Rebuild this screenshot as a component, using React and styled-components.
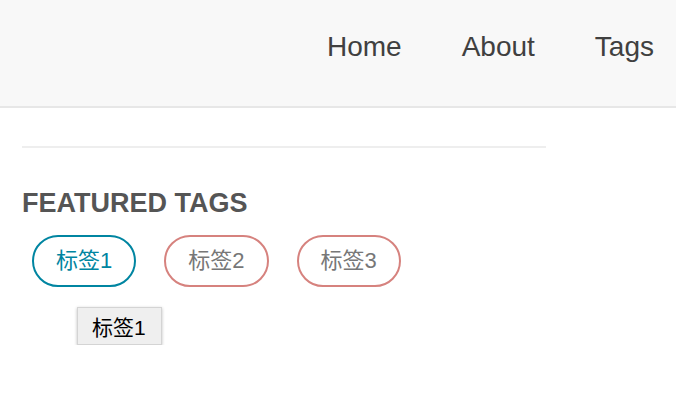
import styled, { createGlobalStyle } from 'styled-components'

const GlobalStyle = createGlobalStyle`
    body {
        margin: 0;
        background: #fff;
        font-family: "Liberation Sans", "Noto Sans CJK SC", sans-serif;
    }
`
const Navbar = styled.nav`
    height: 75px;
    background-color: #f8f8f8;
    border-bottom: 2px solid #e7e7e7;
    display: flex;
    justify-content: flex-end;
    align-items: flex-start;
    gap: 60px;
    padding: 31px 22px 0 0;
`
const NavLink = styled.a`
    font-size: 28px;
    line-height: 32px;
    color: #404040;
    text-decoration: none;
`
const Content = styled.main`
    width: 524px;
    padding: 38px 0 0 22px;
`
const Divider = styled.hr`
    margin: 0;
    border: none;
    border-top: 2px solid #eee;
`
const Heading = styled.h5`
    margin: 40px 0 17px;
    font-size: 27px;
    line-height: 30px;
    font-weight: 700;
    color: #555;
`
const TagRow = styled.div`
    display: flex;
    gap: 28px;
    padding-left: 10px;
`
const Tag = styled.a`
    display: block;
    padding: 11px 22px;
    font-size: 22px;
    line-height: 26px;
    border-radius: 26px;
    border: 2px solid ${props => props.$active ? '#0085a1' : '#d6827e'};
    color: ${props => props.$active ? '#0085a1' : '#777'};
    text-decoration: none;
    white-space: nowrap;
`
const Tooltip = styled.div`
    width: 85px;
    height: 38px;
    box-sizing: border-box;
    margin: 20px 0 0 55px;
    padding-left: 14px;
    display: flex;
    align-items: center;
    background: #efefef;
    border: 1px solid #d4d4d4;
    box-shadow: 0 1px 3px rgba(0, 0, 0, 0.25);
    font-size: 21px;
    color: #000;
    white-space: nowrap;
`

const tags = [
    { name: '标签1', active: true },
    { name: '标签2' },
    { name: '标签3' },
]

function App() {
    return (
        <>
            <GlobalStyle />
            <Navbar>
                <NavLink href="#">Home</NavLink>
                <NavLink href="#">About</NavLink>
                <NavLink href="#">Tags</NavLink>
            </Navbar>
            <Content>
                <Divider />
                <Heading>FEATURED TAGS</Heading>
                <TagRow>
                    {tags.map((tag, i) => (
                        <Tag key={i} href="#" $active={tag.active} title={tag.name}>{tag.name}</Tag>
                    ))}
                </TagRow>
                {/* hover tooltip of the first tag */}
                <Tooltip>{tags[0].name}</Tooltip>
            </Content>
        </>
    )
}

export default App
